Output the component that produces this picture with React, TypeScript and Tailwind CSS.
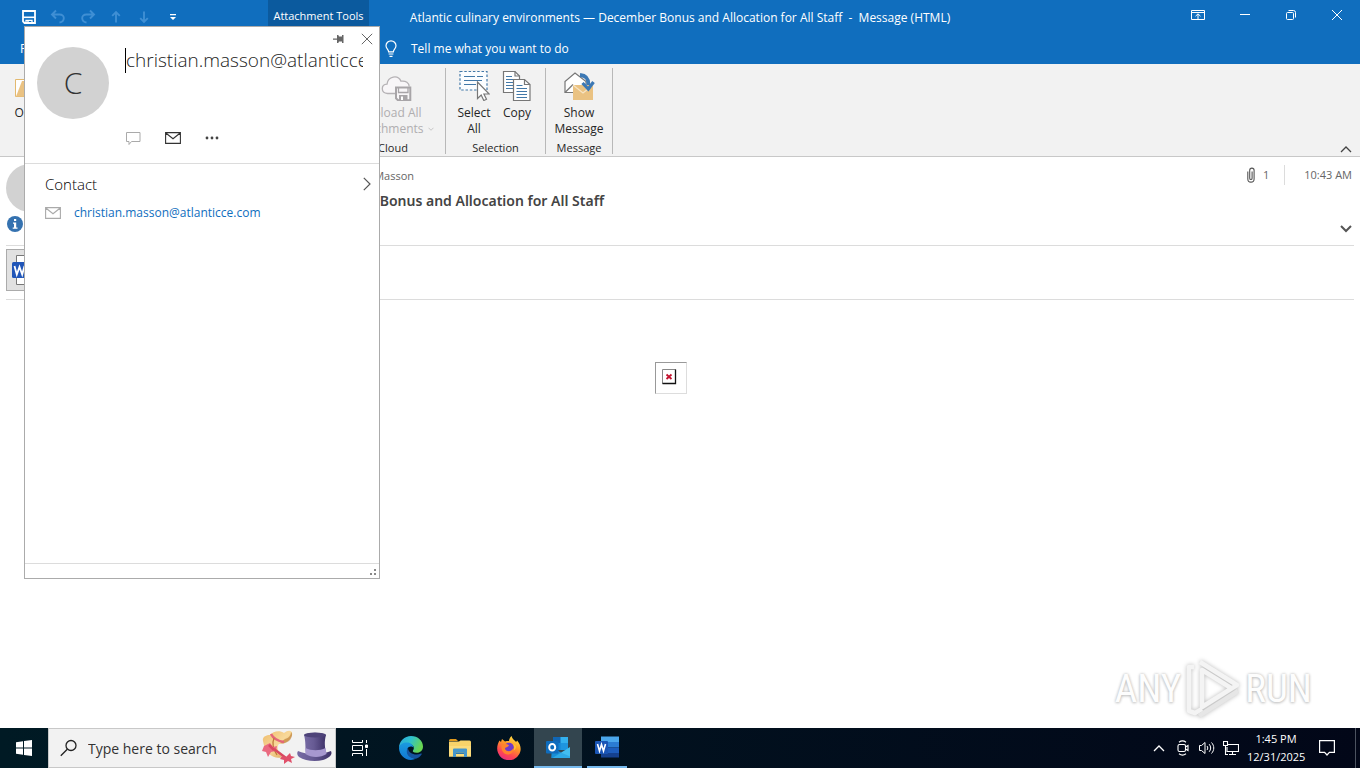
import React, { useState } from 'react';

type IconProps = { className?: string };

const SaveIcon = ({ className }: IconProps) => (
  <svg className={className} viewBox="0 0 14 14" fill="none" stroke="currentColor">
    <path d="M1 1h12v12H2.500L1 11.500z" strokeWidth="1.800" />
    <path d="M1 7.300h12" strokeWidth="1.600" />
    <path d="M4 13v-2.700h6V13" strokeWidth="1.300" />
    <path d="M6 11v2" strokeWidth="1.400" />
  </svg>
);

const UndoIcon = ({ className }: IconProps) => (
  <svg className={className} viewBox="0 0 16 16" fill="none" stroke="currentColor" strokeWidth="1.900">
    <path d="M6 1.500 2 5.500l4 4M2.300 5.500h7.200c6 0 5.500 7.500 0 8" />
  </svg>
);

const ArrowIcon = ({ className }: IconProps) => (
  <svg className={className} viewBox="0 0 10 14" fill="none" stroke="currentColor" strokeWidth="1.900">
    <path d="M5 12.500V2M1.200 5.800 5 2l3.800 3.800" />
  </svg>
);

const BulbIcon = () => (
  <svg className="h-[18px] w-3" viewBox="0 0 12 18" fill="none" stroke="currentColor" strokeWidth="1.200">
    <path d="M3.600 11.800C3.500 9.500 1 8.700 1 5.800a5 5 0 0 1 10 0c0 2.900-2.500 3.700-2.600 6zM3.600 14h4.800M4.500 16.300h3" />
  </svg>
);

const CloudSaveIcon = () => (
  <svg className="h-8 w-8" viewBox="0 0 32 32" fill="none" stroke="#b5b2b5" strokeWidth="1.300">
    <path d="M14 24.500H6.500C-.5 24-.2 15.500 6 15.200 7 7 17 5.500 20 12.200c5-.8 8 2 8.200 5.300" fill="#f8f6f8" />
    <path d="M15 18.500h14.300v12.800H17l-2-2z" fill="#f8f6f8" stroke="#a8a5a8" strokeWidth="2" />
    <path d="M17.500 18.500v5h9.500v-5" stroke="#a8a5a8" />
    <path d="M18 26h8.500v5H18z" fill="#a8a5a8" stroke="none" />
    <path d="M20 27.500h2v3.500h-2z" fill="#fff" stroke="none" />
  </svg>
);

const SelectAllIcon = () => (
  <svg className="h-8 w-8" viewBox="0 0 32 32" fill="none">
    <path d="M2 2.500h27v18.500H2z" fill="#fbfdff" stroke="#4278a8" strokeWidth="1.200" strokeDasharray="2.500 1.800" />
    <path d="M6 7.500h11M19 7.500h6M6 11.500h18M6 15.500h12" stroke="#4278a8" strokeWidth="1.200" />
    <path d="M19.500 13v16.500l3.700-3.500 2.600 5.500 2.700-1.200-2.600-5.300h5.300z" fill="#fff" stroke="#777" strokeWidth="1.200" />
  </svg>
);

const CopyIcon = () => (
  <svg className="h-8 w-8" viewBox="0 0 32 32" fill="none" stroke="#777" strokeWidth="1.200">
    <path d="M2.500 2.500H14l4.500 4.500v16.500h-16z" fill="#fff" />
    <path d="M14 2.500V7h4.500" />
    <path d="M5 7.500h6M5 10.500h8M5 13.500h7M5 16.500h7M5 19.500h7" stroke="#4278a8" />
    <path d="M12.500 10.500h11l5.500 5v16H12.500z" fill="#fff" />
    <path d="M23.500 10.500v5H29" />
    <path d="M15.500 16.500h6M15.500 19.500h10.500M15.500 22.500h10.500M15.500 25.500h10.500M15.500 28.500h10.500" stroke="#4278a8" />
  </svg>
);

const ShowMessageIcon = () => (
  <svg className="h-8 w-8" viewBox="0 0 32 32" fill="none">
    <path d="M2 23.500V12.500L12 4l11 8.500v11z" fill="#fff" stroke="#777" strokeWidth="1.200" />
    <path d="m2 23.500 8-8" stroke="#777" strokeWidth="1.200" />
    <path d="M10 16h20v15H10z" fill="#eac282" />
    <path d="m10 16 10 8 10-8" stroke="#f7e4c4" strokeWidth="1.300" />
    <path d="M17 6c6.500.5 8.500 4 8.500 10" stroke="#3c78b4" strokeWidth="3.800" />
    <path d="m19.500 14 5.800 6 5.200-7" stroke="#3c78b4" strokeWidth="3.200" />
  </svg>
);

const PaperclipIcon = () => (
  <svg className="h-4 w-2" viewBox="0 0 8 16" fill="none" stroke="#555" strokeWidth="1.100">
    <path d="M.8 4.500v7.500a3.100 3.100 0 0 0 6.300 0V3.300a2.200 2.200 0 0 0-4.400 0v7.900c0 1.800 2.400 1.800 2.400 0V4.500" />
  </svg>
);

const Chevron = ({ className }: IconProps) => (
  <svg className={className} viewBox="0 0 12 7" fill="none" stroke="currentColor" strokeWidth="1.300">
    <path d="m1 1 5 5 5-5" />
  </svg>
);

const EnvelopeIcon = ({ className }: IconProps) => (
  <svg className={className} viewBox="0 0 16 12" fill="none" stroke="currentColor">
    <path d="M.6.6h14.800v10.800H.6zM.8 1 8 6.800 15.200 1" strokeWidth="1.100" />
  </svg>
);

const EdgeIcon = () => (
  <svg className="h-6 w-6" viewBox="0 0 24 24">
    <defs>
      <linearGradient id="edge-top" x1="0" y1="0" x2="1" y2=".4">
        <stop offset="0" stopColor="#2aa5de" />
        <stop offset=".5" stopColor="#2fc2cc" />
        <stop offset="1" stopColor="#68d652" />
      </linearGradient>
      <linearGradient id="edge-low" x1="0" y1="0" x2="0" y2="1">
        <stop offset="0" stopColor="#1a9be0" />
        <stop offset="1" stopColor="#1277d2" />
      </linearGradient>
    </defs>
    <path d="M0 12C0 5 5.500 0 12 0c7 0 12 5 12 10.500 0 4-3 6.300-6.500 6.300-3 0-4.300-1.200-3.500-2.300 2.500-3.500-.5-6.500-4-6.500C5 7 1 9 0 12z" fill="url(#edge-top)" />
    <path d="M0 12C.5 8.500 4 6.500 8 6.500c4 0 6.500 2.500 6.500 5.500-1-2-5-2-6 .8C7 18 12 22.500 17.500 22.600 8.500 27 0 20 0 12z" fill="url(#edge-low)" />
    <path d="M9 11.500c-3.500 5 .5 11.500 8.500 11.100 2.500-1 4.200-2.600 5.200-4.300.3-.6-.2-1-.8-.7-5 2.200-13 .4-12.900-6.100z" fill="#15549f" />
  </svg>
);

const ExplorerIcon = () => (
  <svg className="h-[22px] w-[22px]" viewBox="0 0 22 20">
    <path d="M0 2.500Q0 1 1.500 1H7l2 2H0z" fill="#e29a1c" />
    <path d="M0 3.500h10l1.500-1H20.500Q22 2.500 22 4v14.500H0z" fill="#f8d36a" />
    <path d="M0 8h22v10.500H0z" fill="#fcdc7c" />
    <path d="M4 11.500Q4 10.500 5 10.500h12q1 0 1 1V19h-3v-4.500H7V19H4z" fill="#4596cc" />
    <path d="M7 14.500h8V16H7z" fill="#2f79ab" />
  </svg>
);

const FirefoxIcon = () => (
  <svg className="h-6 w-6" viewBox="0 0 24 24">
    <defs>
      <linearGradient id="fox" x1=".8" y1="0" x2=".3" y2="1">
        <stop offset="0" stopColor="#ffe84a" />
        <stop offset=".4" stopColor="#ff9a25" />
        <stop offset=".75" stopColor="#ff4552" />
        <stop offset="1" stopColor="#e6307e" />
      </linearGradient>
    </defs>
    <path d="M2.500 4.500 4 6l1-3 3 2.500c2-.6 3-.6 4-.5.2-2 1-3.700 2.600-5 .5 3 3 4 4.500 6l1-1.500c4 4.500 4.800 10 1.500 14.500a11.700 11.700 0 0 1-20.500-2C-.8 12.500.5 8 2.500 4.500z" fill="url(#fox)" />
    <circle cx="12" cy="11.500" r="4.800" fill="#713bc9" />
    <path d="M4.500 9c3-1.800 5.500-.8 7.500.2-1 2.500-4 1.500-4 3.800 2 3.500 7 2.500 8.500-1 .5 4-2.500 7-6 6.500-4 0-6.500-4-6-9.500z" fill="#ff832d" />
    <path d="M13 5.500c4 2 5 5.500 3.500 9 2-1 2.500-2.500 2.500-4.500" fill="#ffc332" />
  </svg>
);

const OutlookIcon = () => (
  <svg className="h-6 w-[26px]" viewBox="0 0 26 24">
    <path d="M8 2h15v12H8z" fill="#1066b5" />
    <path d="M15.500 2H23v6h-7.500z" fill="#33b0ee" />
    <path d="M8 8h8v7H8z" fill="#1485d3" />
    <path d="M15.500 8H23v7h-7.500z" fill="#1e95df" />
    <path d="M6.500 12 25 23H6.500z" fill="#1687cf" />
    <path d="M25 12v11H7.500z" fill="#43bdee" />
    <path d="M6 23h19v-1.500L8 14z" fill="#1996db" opacity=".5" />
    <rect x="1" y="6" width="12.500" height="12.500" rx="1" fill="#0f6cbd" />
    <ellipse cx="7.200" cy="12.200" rx="3" ry="3.300" fill="none" stroke="#fff" strokeWidth="2" />
  </svg>
);

const WordTaskIcon = () => (
  <svg className="h-6 w-[26px]" viewBox="0 0 26 24">
    <path d="M7 1.500h18V7H7z" fill="#4ba7ec" />
    <path d="M7 7h18v5.500H7z" fill="#2b7cd3" />
    <path d="M7 12.500h18V18H7z" fill="#1d5dbd" />
    <path d="M7 18h18v4.500H7z" fill="#15418f" />
    <rect x="1" y="6" width="13" height="13" rx="1" fill="#1a55b5" />
    <path d="m3.500 9 2 7L7.500 9.500l2 6.500 2-7" fill="none" stroke="#fff" strokeWidth="1.600" />
  </svg>
);

const HatsIcon = () => (
  <svg className="h-9 w-[72px]" viewBox="0 0 72 36">
    <defs>
      <linearGradient id="hat" x1="0" x2="1">
        <stop offset="0" stopColor="#776ba4" />
        <stop offset=".45" stopColor="#665a93" />
        <stop offset="1" stopColor="#3e3268" />
      </linearGradient>
      <linearGradient id="straw" x1="0" y1="0" x2="1" y2="1">
        <stop offset="0" stopColor="#eebb6b" />
        <stop offset=".5" stopColor="#f8d99a" />
        <stop offset="1" stopColor="#d89a4c" />
      </linearGradient>
    </defs>
    <path d="M2 11C1 7 5 5 9 5c3-4 10-5 14-2 5-4 9-2 8 2-2 6-8 9-13 9-3 3-1 9 3 13-6 3-17-2-19-16z" fill="url(#straw)" />
    <path d="M24 9c4-1 6-4 6-7 2 2 1 5-1 8-3 3-7 4-10 3z" fill="#b8762f" opacity=".6" />
    <path d="M10 4c2 4 6 7 13 8" stroke="#e4657a" strokeWidth="2.500" fill="none" />
    <path d="M13 8c-2 5-1 11 3 17" stroke="#bd7738" strokeWidth="1.200" fill="none" />
    <path d="m3 16 6-3 3 4 4-1-1 5-5 1-3 5-2-5-4-1z" fill="#ea6a80" />
    <path d="m13 19 12 9M8 15l5 5" stroke="#d9485f" strokeWidth="2.500" />
    <path d="m21 26 4 1 4-4 1 3 4 1-4 2 1 4-4-2-4 3v-4l-4-1z" fill="#e0506a" />
    <path d="M37 21c8 4 24 4 33 0 2 4-2 7-8 9-8 2-18 1-24-3q-3-3-1-6z" fill="url(#hat)" />
    <path d="M43 5c5-3 17-3 22 0-2 7-1 12 0 19-6 4-15 4-20 0-1-7 0-12-2-19z" fill="url(#hat)" />
    <path d="M44.500 18c6 3 14 3 20 0l1 6c-6 4-15 4-21 0z" fill="#a798cf" />
    <ellipse cx="54" cy="5" rx="11" ry="2.500" fill="#4e4379" />
  </svg>
);

const RibbonGroup = ({ label, className, children }: { label: string; className: string; children: React.ReactNode }) => (
  <section className={`flex flex-col justify-between border-r border-[#b8b8b8] ${className}`}>
    <div className="flex justify-center">{children}</div>
    <h2 className="text-center text-[11px] leading-3 text-[#262626]">{label}</h2>
  </section>
);

const RibbonButton = ({ icon, lines, className = '' }: { icon: React.ReactNode; lines: string[]; className?: string }) => (
  <button className={`flex flex-col items-center pt-px text-xs leading-4 text-[#262626] ${className}`}>
    {icon}
    <span className="mt-1 whitespace-nowrap">
      {lines.map((line) => (
        <span key={line} className="block">{line}</span>
      ))}
    </span>
  </button>
);

const TitleBar = () => (
  <header className="bg-[#106ebe] text-white">
    <div className="grid h-[34px] grid-cols-[1fr_auto_1fr] items-center">
      <div className="flex h-full items-center pl-[22px]">
        <button aria-label="Save"><SaveIcon className="h-3.5 w-3.5" /></button>
        <button aria-label="Undo" className="ml-3.5 text-[#3f8fd4]"><UndoIcon className="h-4 w-4" /></button>
        <button aria-label="Redo" className="ml-3.5 text-[#3f8fd4]"><UndoIcon className="h-4 w-4 -scale-x-100" /></button>
        <button aria-label="Previous item" className="ml-[15px] text-[#3f8fd4]"><ArrowIcon className="h-3.5 w-2.5" /></button>
        <button aria-label="Next item" className="ml-[18px] text-[#3f8fd4]"><ArrowIcon className="h-3.5 w-2.5 rotate-180" /></button>
        <button aria-label="Customize toolbar" className="ml-5">
          <svg className="h-2 w-2" viewBox="0 0 8 8" fill="currentColor"><path d="M1 1h6v1.200H1zM1 4h6L4 7z" /></svg>
        </button>
        <span className="ml-[91px] flex h-full w-[101px] items-center justify-center whitespace-nowrap bg-[#0b5a9e] pb-0.5 text-[11px]">
          Attachment Tools
        </span>
      </div>
      <h1 className="whitespace-nowrap pt-0.5 text-xs">
        Atlantic culinary environments — December Bonus and Allocation for All Staff&nbsp; -&nbsp; Message (HTML)
      </h1>
      <div className="flex items-center justify-end gap-[34px] pr-[17px] pb-1">
        <button aria-label="Ribbon display options">
          <svg className="h-3 w-[14px]" viewBox="0 0 14 12" fill="none" stroke="currentColor"><path d="M.5 1.500h13v9H.5zM.5 3.500h13M7 10V5M4.500 7.200 7 4.800l2.500 2.400" /></svg>
        </button>
        <button aria-label="Minimize">
          <svg className="h-3 w-3" viewBox="0 0 12 12" stroke="currentColor"><path d="M1 5.500h10" /></svg>
        </button>
        <button aria-label="Restore">
          <svg className="h-3 w-3" viewBox="0 0 12 12" fill="none" stroke="currentColor"><rect x="1.500" y="3.500" width="7" height="7" rx="1" /><path d="M3.500 1.500h5q2 0 2 2v5" /></svg>
        </button>
        <button aria-label="Close">
          <svg className="h-3 w-3" viewBox="0 0 12 12" stroke="currentColor"><path d="m1 1 10 10M11 1 1 11" /></svg>
        </button>
      </div>
    </div>
    <div className="flex h-[30px] items-center">
      <nav className="w-[385px] shrink-0 pl-5 text-xs"><button>File</button></nav>
      <button className="flex items-center gap-3.5 text-xs"><BulbIcon />Tell me what you want to do</button>
    </div>
  </header>
);

const Ribbon = () => (
  <div className="flex h-[93px] border-b border-[#c8c8c8] bg-[#f2f2f2] pt-1 pb-0.5">
    <div className="w-[341px] shrink-0 pl-3.5">
      <RibbonButton
        icon={<svg className="h-8 w-8" viewBox="0 0 32 32"><path d="M1.500 10.500h29v17h-29z" fill="#fff" stroke="#e3b96f" /><path d="M2 27.500 8 12h20v15.500z" fill="#eac282" /></svg>}
        lines={['Open']}
      />
    </div>
    <RibbonGroup label="Cloud" className="w-[105px] shrink-0">
      <button disabled className="flex flex-col items-center pt-px text-xs leading-4 text-[#b0aeb0]">
        <span className="pl-2"><CloudSaveIcon /></span>
        <span className="mt-1">Upload All</span>
        <span className="flex items-center gap-1">Attachments <Chevron className="h-1 w-1.5" /></span>
      </button>
    </RibbonGroup>
    <RibbonGroup label="Selection" className="w-[100px] shrink-0">
      <RibbonButton icon={<SelectAllIcon />} lines={['Select', 'All']} className="w-[43px]" />
      <RibbonButton icon={<CopyIcon />} lines={['Copy']} className="w-[43px]" />
    </RibbonGroup>
    <RibbonGroup label="Message" className="w-[67px] shrink-0">
      <RibbonButton icon={<ShowMessageIcon />} lines={['Show', 'Message']} />
    </RibbonGroup>
    <button aria-label="Collapse the ribbon" className="mr-2 mb-px ml-auto self-end text-[#444]">
      <Chevron className="h-[7px] w-3 rotate-180" />
    </button>
  </div>
);

const MessageHeader = () => (
  <div className="px-1.5 text-[#666]">
    <div className="flex h-[89px] border-b border-[#dcdcdc]">
      <div className="w-[59px] shrink-0 pt-[7px]">
        <div className="h-12 w-12 rounded-full bg-[#d2d2d2]" />
        <svg className="mt-1 ml-px h-4 w-4" viewBox="0 0 16 16"><circle cx="8" cy="8" r="8" fill="#3572b0" /><path d="M7 3h2.200v2H7zM6 6.500h3.200v5h1.300v1.300H5.700v-1.300H7V7.800H6z" fill="#fff" /></svg>
      </div>
      <div className="flex-1">
        <p className="w-[349px] pt-2.5 text-right text-[11px] leading-[18px] whitespace-nowrap">on behalf of Christian Masson</p>
        <p className="w-[539px] pt-1.5 text-right text-sm leading-5 font-semibold whitespace-nowrap text-[#444] [font-family:'Noto_Sans',sans-serif]">
          December Bonus and Allocation for All Staff
        </p>
      </div>
      <div className="flex flex-col items-end justify-between pt-2 pr-0.5 pb-3">
        <div className="flex items-center text-[11px]">
          <PaperclipIcon />
          <span className="ml-2">1</span>
          <span className="mx-[15px] h-5 w-px bg-[#dcdcdc]" />
          <time className="pl-1">10:43 AM</time>
        </div>
        <button aria-label="Expand header" className="text-[#555]">
          <svg className="h-2 w-3" viewBox="0 0 12 8" fill="none" stroke="currentColor" strokeWidth="2"><path d="m1 1 5 5 5-5" /></svg>
        </button>
      </div>
    </div>
    <div className="h-[54px] border-b border-[#dcdcdc] pt-[3px]">
      <button aria-label="Word attachment" className="flex h-[42px] w-40 items-center border border-[#ababab] bg-[#e1e1e1] pl-1">
        <svg className="h-8 w-8" viewBox="0 0 32 32">
          <path d="M5.500 1.500h20v29h-20z" fill="#fff" stroke="#777" />
          <rect x="1" y="8" width="16" height="16" rx="1.500" fill="#2156b8" />
          <path d="m3.500 12 2.300 8.500L8.500 13l2.700 7.500 2.300-8.500" fill="none" stroke="#fff" strokeWidth="1.800" />
        </svg>
      </button>
    </div>
  </div>
);

const ContactCard = () => {
  const [name, setName] = useState('christian.masson@atlanticce.com');

  return (
    <aside className="absolute top-[26px] left-6 flex h-[553px] w-[356px] flex-col border border-[#ababab] bg-white">
      <div className="flex h-[137px] border-b border-[#dcdcdc] pl-3">
        <div className="mt-5 flex h-[72px] w-[72px] shrink-0 items-center justify-center rounded-full bg-[#d2d2d2] text-3xl font-light text-[#333]">C</div>
        <div className="ml-4 flex-1">
          <div className="flex h-5 items-center justify-end gap-4 pt-1 pr-1.5 text-[#666]">
            <button aria-label="Pin card">
              <svg className="h-2.5 w-3" viewBox="0 0 12 10" fill="currentColor"><path d="M0 4.500h4V1h1.300l.7 1.500h3V1h1.500v8H9V7.500H6L5.300 9H4V5.700H0z" /></svg>
            </button>
            <button aria-label="Close card">
              <svg className="h-3 w-3" viewBox="0 0 12 12" stroke="currentColor"><path d="m.8.8 10.400 10.400M11.200.8.8 11.200" /></svg>
            </button>
          </div>
          <div className="flex items-center">
            <span className="h-[25px] w-px bg-black" />
            <input
              aria-label="Contact name"
              value={name}
              onChange={(e) => setName(e.target.value)}
              className="h-[27px] w-[237px] text-[19px] font-light text-[#222] outline-none"
            />
          </div>
          <div className="mt-[57px] flex items-center gap-6">
            <button aria-label="Send message" className="text-[#aaa]">
              <svg className="h-[14px] w-4" viewBox="0 0 16 14" fill="none" stroke="currentColor"><path d="M1.500 1.500H15v9H6.500l-2.500 3v-3H1.500z" /></svg>
            </button>
            <button aria-label="Send email" className="text-[#333]"><EnvelopeIcon className="h-3 w-4" /></button>
            <button aria-label="More options" className="text-[#444]">
              <svg className="h-1 w-[14px]" viewBox="0 0 14 4" fill="currentColor"><circle cx="2" cy="2" r="1.400" /><circle cx="7" cy="2" r="1.400" /><circle cx="12" cy="2" r="1.400" /></svg>
            </button>
          </div>
        </div>
      </div>
      <div className="flex-1 pt-2.5 pr-2 pl-5">
        <button className="flex w-full items-center justify-between text-[15px] leading-5 font-light text-black">
          Contact
          <svg className="h-[14px] w-2" viewBox="0 0 8 14" fill="none" stroke="#555" strokeWidth="1.200"><path d="m.8.8 6.200 6.200-6.200 6.200" /></svg>
        </button>
        <div className="mt-[11px] flex items-center gap-[13px]">
          <EnvelopeIcon className="h-3 w-4 text-[#aaa]" />
          <a href="mailto:christian.masson@atlanticce.com" className="text-xs text-[#106ebe]">christian.masson@atlanticce.com</a>
        </div>
      </div>
      <div className="flex h-[15px] items-end justify-end border-t border-[#dcdcdc] p-[3px]">
        <svg className="h-1.5 w-1.5" viewBox="0 0 6 6" fill="#888"><path d="M4 0h2v2H4zM0 4h2v2H0zM4 4h2v2H4z" /></svg>
      </div>
    </aside>
  );
};

const Watermark = () => (
  <div className="absolute right-12 bottom-2 flex items-center gap-1 text-[39px] leading-[60px] text-[#fdfdfd] [font-family:'Roboto_Condensed','Liberation_Sans',sans-serif] [text-shadow:0_0_3px_#bbb,0_1px_3px_#ccc]">
    <span>ANY</span>
    <svg className="h-[62px] w-14 drop-shadow-[0_0_2px_#bbb]" viewBox="0 0 56 62" fill="none" stroke="#f4f4f4" strokeWidth="4.500" strokeLinejoin="round">
      <path d="M9 9H4v44l6 2 7-4M15 4l37 23-35 22V12l29 18" />
      <path d="m14 58 39-25" stroke="#e6e6e6" />
    </svg>
    <span>RUN</span>
  </div>
);

const TaskButton = ({ label, className = '', children }: { label: string; className?: string; children: React.ReactNode }) => (
  <button aria-label={label} className={`flex h-10 items-center justify-center ${className}`}>{children}</button>
);

const Taskbar = () => (
  <footer className="flex h-10 bg-gradient-to-r from-[#001a24] to-[#020718] text-white">
    <TaskButton label="Start" className="w-12">
      <svg className="h-4 w-4" viewBox="0 0 16 16" fill="#fff"><path d="M0 2.200 7 1.200v6.300H0zM8 1l8-1v7.500H8zM0 8.500h7v6.300l-7-1zM8 8.500h8V16l-8-1z" /></svg>
    </TaskButton>
    <label className="flex w-72 items-center border border-[#c8c8c8] bg-[#f2f2f2] pl-[11px]">
      <svg className="h-[18px] w-[18px] shrink-0" viewBox="0 0 18 18" fill="none" stroke="#222" strokeWidth="1.300"><circle cx="11" cy="6.500" r="5" /><path d="m7.300 10.200-6.500 6.500" /></svg>
      <input aria-label="Search" placeholder="Type here to search" className="ml-2.5 w-40 pt-0.5 text-sm outline-none placeholder:text-[#333]" />
      <span className="ml-auto pr-0.5"><HatsIcon /></span>
    </label>
    <TaskButton label="Task view" className="w-12">
      <svg className="h-4 w-4" viewBox="0 0 16 16" fill="none" stroke="#fff"><path d="M.5 5.500h10v5H.5zM.5 0v2.500h10V0M.5 16v-2.500h10V16M14.500 0v3M14.500 9v7" /><path d="M13.500 5h2v2.500h-2z" fill="#fff" /></svg>
    </TaskButton>
    <TaskButton label="Edge" className="ml-0.5 w-[49px]"><EdgeIcon /></TaskButton>
    <TaskButton label="File Explorer" className="w-[49px]"><ExplorerIcon /></TaskButton>
    <TaskButton label="Firefox" className="w-[49px]"><FirefoxIcon /></TaskButton>
    <TaskButton label="Outlook" className="ml-px w-12 border-b-2 border-[#76b9ed] bg-[#33454f]"><OutlookIcon /></TaskButton>
    <TaskButton label="Word" className="ml-[5px] w-10 border-b-2 border-[#76b9ed]"><WordTaskIcon /></TaskButton>
    <div className="ml-auto flex items-center">
      <button aria-label="Show hidden icons"><Chevron className="h-[7px] w-3 rotate-180" /></button>
      <svg className="ml-3 h-4 w-3" viewBox="0 0 12 16" fill="none" stroke="#fff" strokeWidth="1.100"><rect x="1" y="4.500" width="7.500" height="7" rx="1.500" /><path d="M8.500 7 11 5.500v5L8.500 9M2 2.200c2-1.500 5-1.500 7 0M2 13.800c2 1.500 5 1.500 7 0" /></svg>
      <svg className="ml-2.5 h-4 w-4" viewBox="0 0 16 16" fill="none" stroke="#fff"><path d="M.5 5.500h2L6 2.500v11l-3.500-3h-2zM8 6c1 1.300 1 2.700 0 4M10.200 4.200c2 2.300 2 5.300 0 7.600M12.500 2.500c3 3.300 3 7.700 0 11" /></svg>
      <svg className="ml-2 h-4 w-4" viewBox="0 0 16 16" fill="none" stroke="#fff" strokeWidth="1.100"><path d="M5 4.500h10.500v7H4V7M9.500 12v2.500M6 14.500h7M.5 1.500h4v4h-4zM2.500 5.500v9H5" /></svg>
      <div className="ml-2 w-[58px] text-center text-[11px] leading-[18px] whitespace-nowrap">
        <div>1:45 PM</div>
        <div>12/31/2025</div>
      </div>
      <button aria-label="Notifications" className="ml-[14px]">
        <svg className="h-4 w-4" viewBox="0 0 16 16" fill="none" stroke="#fff" strokeWidth="1.200"><path d="M.6.6h14.800v11.800h-5L8 15l-2.400-2.600h-5z" /></svg>
      </button>
      <span className="mr-1 ml-5 h-10 w-px bg-[#4c5360]" />
    </div>
  </footer>
);

export default function App() {
  return (
    <div className="relative flex min-h-screen flex-col overflow-hidden bg-white [font-family:'Open_Sans','Noto_Sans',sans-serif]">
      <TitleBar />
      <Ribbon />
      <MessageHeader />
      <main className="relative flex-1 pr-[18px]">
        <div className="mx-auto mt-[62px] h-8 w-8 border border-[#ddd] border-t-[#999] border-l-[#999] pt-1.5 pl-1.5">
          <svg className="h-4 w-4" viewBox="0 0 16 16" fill="none"><path d="M.5.5h13v14H.5z" stroke="#888" /><path d="M.5 14.500h13V.5" stroke="#111" strokeWidth="1.300" /><path d="m4.500 5.500 5 4.500M9.500 5.500l-5 4.500" stroke="#c4122f" strokeWidth="1.800" /></svg>
        </div>
        <Watermark />
      </main>
      <Taskbar />
      <ContactCard />
    </div>
  );
}
